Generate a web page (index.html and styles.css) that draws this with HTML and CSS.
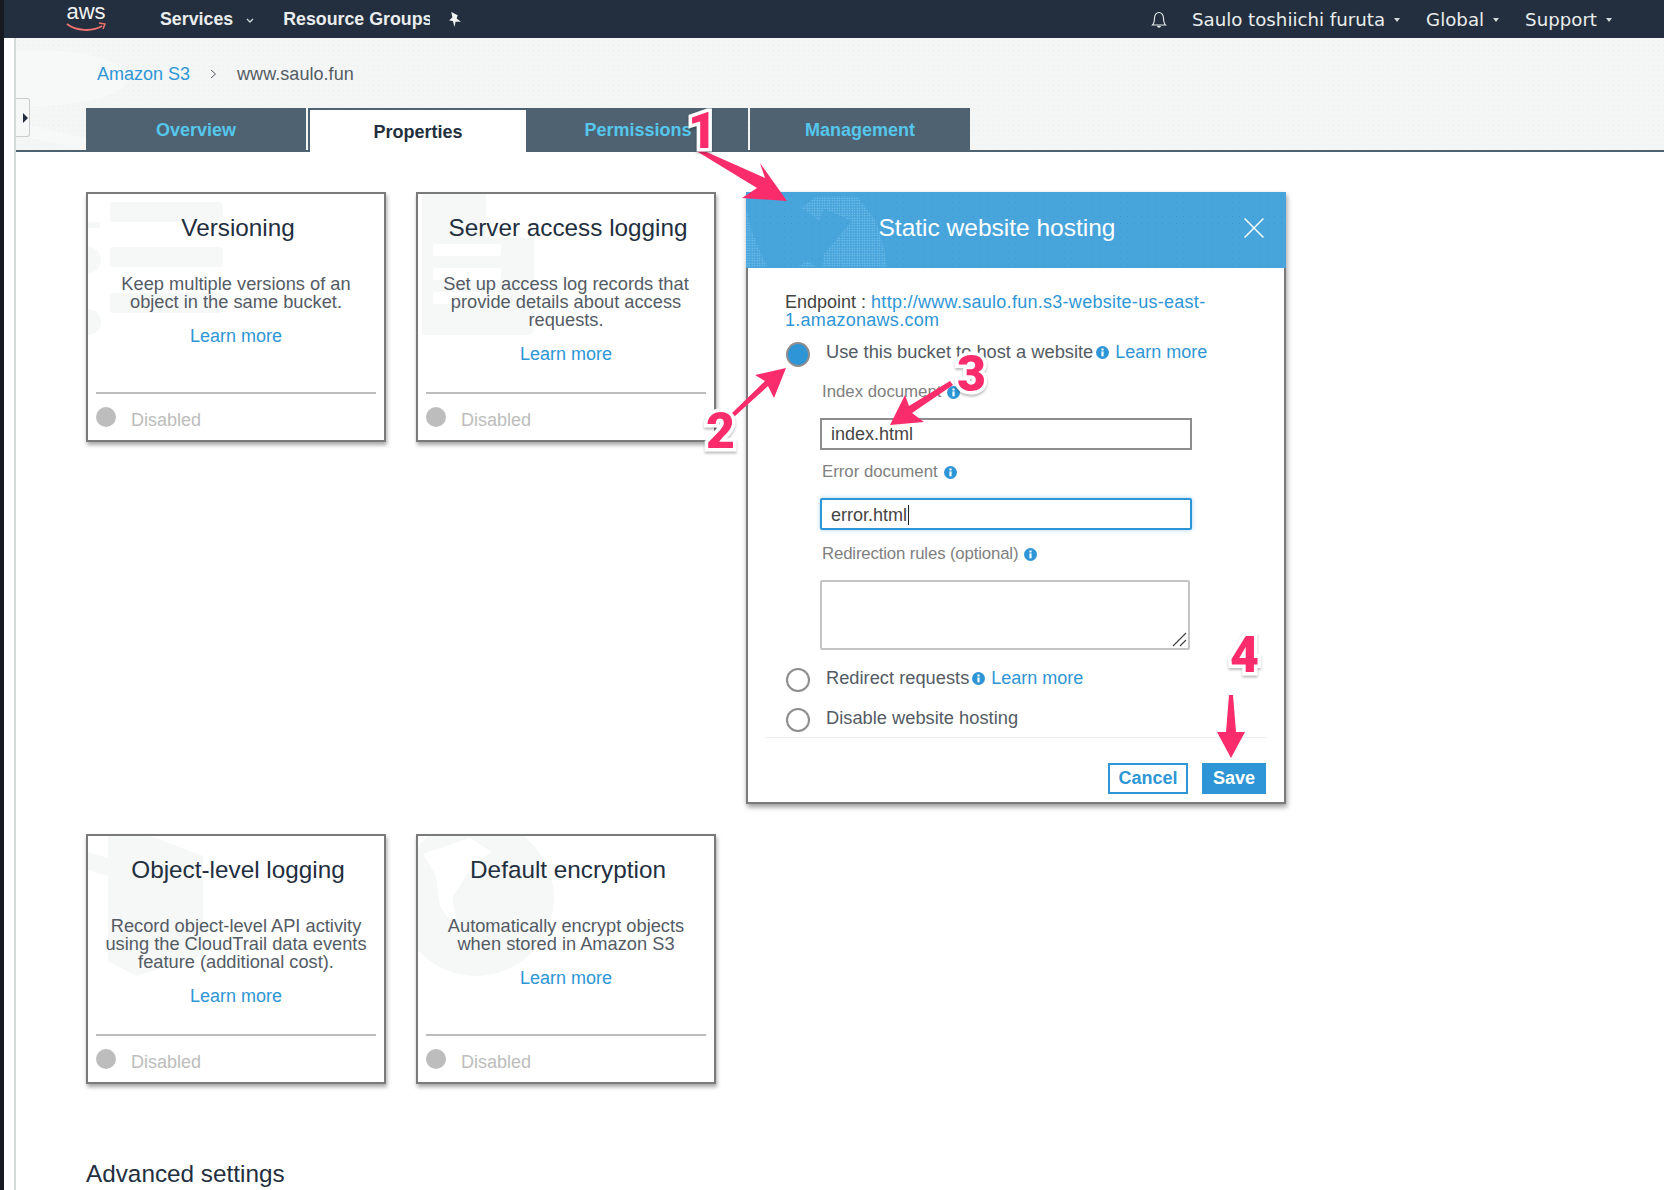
FILE: index.html
```html
<!DOCTYPE html>
<html lang="en">
<head>
<meta charset="utf-8">
<title>www.saulo.fun - Amazon S3</title>
<link rel="stylesheet" href="styles.css">
</head>
<body>
<header class="nav">
  <div class="logo">
    <span class="logo-text">aws</span>
    <svg class="logo-smile" viewBox="0 0 40 10" width="40" height="10"><path d="M1 2 C10 9 26 10 36 4" fill="none" stroke="#f0726f" stroke-width="2"/><path d="M33 1 L39 2 L37 7" fill="none" stroke="#f0726f" stroke-width="1.5"/></svg>
  </div>
  <span class="nav-main nav-services">Services</span>
  <svg class="chev" viewBox="0 0 8 5" width="8" height="5"><path d="M1 1 L4 4 L7 1" fill="none" stroke="#d5dbdb" stroke-width="1.3"/></svg>
  <span class="nav-main nav-groups">Resource Groups</span>
  <svg class="pin" viewBox="0 0 12 14" width="13" height="15"><path d="M3 0 L9 3 L8 6 L12 9 L7 9 L6 14 L4.500 8.500 L1 8 L4 5 Z" fill="#f2f3f3"/></svg>
  <div class="nav-right">
    <svg class="bell" viewBox="0 0 16 18" width="16" height="18"><path d="M1.500 14 C3.500 12 3.500 10 3.500 7 C3.500 4 5.500 1.500 8 1.500 C10.500 1.500 12.500 4 12.500 7 C12.500 10 12.500 12 14.500 14 Z" fill="none" stroke="#eaeded" stroke-width="1.100"/><path d="M6 15 C6.500 17.300 9.500 17.300 10 15 Z" fill="#eaeded"/></svg>
    <span class="nav-item nav-user">Saulo toshiichi furuta</span><span class="tri"></span>
    <span class="nav-item nav-global">Global</span><span class="tri"></span>
    <span class="nav-item nav-support">Support</span><span class="tri"></span>
  </div>
</header>

<div class="shell">
  <main class="content">
    <section class="subhead">
      <svg class="subhead-mark" viewBox="0 0 120 112" width="120" height="112"><ellipse cx="20" cy="40" rx="92" ry="28" fill="#f7f8f8"/><path d="M0 90 C40 100 70 106 90 112" stroke="#f7f8f8" stroke-width="12" fill="none"/></svg>
      <nav class="crumbs">
        <a class="crumb-link">Amazon S3</a>
        <svg class="crumb-sep" viewBox="0 0 7 10" width="7" height="10"><path d="M1 1 L5.500 5 L1 9" fill="none" stroke="#545b64" stroke-width="1"/></svg>
        <span class="crumb-current">www.saulo.fun</span>
      </nav>
      <div class="tabs">
        <span class="tab tab-overview">Overview</span>
        <span class="tab tab-active">Properties</span>
        <span class="tab tab-perm">Permissions</span>
        <span class="tab tab-mgmt">Management</span>
      </div>
    </section>

    <section class="grid">
      <article class="card">
        <svg class="mark" viewBox="0 0 296 245" width="296" height="245">
          <rect x="22" y="8" width="113" height="20" rx="3"/><rect x="22" y="53" width="113" height="20" rx="3"/><rect x="22" y="99" width="113" height="20" rx="3"/>
          <rect x="0" y="28" width="12" height="6"/><circle cx="0" cy="66" r="13"/><circle cx="0" cy="128" r="13"/>
        </svg>
        <h3 class="card-title">Versioning</h3>
        <p class="card-desc">Keep multiple versions of an object in the same bucket.</p>
        <a class="card-link">Learn more</a>
        <footer class="card-foot"><span class="dot"></span><span class="status">Disabled</span></footer>
      </article>

      <article class="card">
        <svg class="mark" viewBox="0 0 296 245" width="296" height="245">
          <path d="M4 0 L68 0 L116 44 L116 134 Q116 141 109 141 L4 141 Z"/>
          <path d="M68 0 L116 44 L68 44 Z" fill="#fff"/>
          <rect x="15" y="50" width="68" height="12" rx="3" fill="#fff"/><rect x="15" y="74" width="68" height="12" rx="3" fill="#fff"/><rect x="15" y="98" width="68" height="12" rx="3" fill="#fff"/>
        </svg>
        <h3 class="card-title">Server access logging</h3>
        <p class="card-desc">Set up access log records that provide details about access requests.</p>
        <a class="card-link">Learn more</a>
        <footer class="card-foot"><span class="dot"></span><span class="status">Disabled</span></footer>
      </article>

      <article class="modal">
        <div class="modal-head">
          <svg class="modal-globe" viewBox="0 0 150 75" width="150" height="75">
            <defs><pattern id="dots" width="2.500" height="2.500" patternUnits="userSpaceOnUse"><circle cx="1.200" cy="1.200" r="0.650" fill="#86c9ee"/></pattern></defs>
            <path d="M55 16 L71 4 L111 4 L130 29 L138 56 L141 75 L76 75 L78 62 L95 42 L106 29 L78 17 L73 29 L61 19 Z" fill="url(#dots)"/>
            <path d="M0 15 L6 40 L21 75 L0 75 Z" fill="url(#dots)"/>
            <path d="M51 75 L61 69 L71 75 Z" fill="url(#dots)"/>
          </svg>
          <h2 class="modal-title">Static website hosting</h2>
          <svg class="modal-close" viewBox="0 0 18 18" width="20" height="20"><path d="M0.500 0.500 L17.500 17.500 M17.500 0.500 L0.500 17.500" stroke="#fff" stroke-width="1.300"/></svg>
        </div>
        <div class="modal-body">
          <p class="endpoint">Endpoint : <a class="link link-url">http://www.saulo.fun.s3-website-us-east-1.amazonaws.com</a></p>
          <div class="radio-row radio-row-first">
            <span class="radio radio-on"></span>
            <span class="radio-label">Use this bucket to host a website</span>
            <svg class="info" viewBox="0 0 12 12" width="13" height="13"><circle cx="6" cy="6" r="6" fill="#2e96d6"/><rect x="5" y="5" width="2" height="4.500" fill="#fff"/><rect x="5" y="2.300" width="2" height="1.800" fill="#fff"/></svg>
            <a class="link radio-link">Learn more</a>
          </div>
          <div class="fields">
            <label class="field-label">Index document <svg class="info" viewBox="0 0 12 12" width="13" height="13"><circle cx="6" cy="6" r="6" fill="#2e96d6"/><rect x="5" y="5" width="2" height="4.500" fill="#fff"/><rect x="5" y="2.300" width="2" height="1.800" fill="#fff"/></svg></label>
            <div class="input">index.html</div>
            <label class="field-label">Error document <svg class="info" viewBox="0 0 12 12" width="13" height="13"><circle cx="6" cy="6" r="6" fill="#2e96d6"/><rect x="5" y="5" width="2" height="4.500" fill="#fff"/><rect x="5" y="2.300" width="2" height="1.800" fill="#fff"/></svg></label>
            <div class="input input-focus">error.html<span class="caret"></span></div>
            <label class="field-label field-label-tight">Redirection rules (optional) <svg class="info" viewBox="0 0 12 12" width="13" height="13"><circle cx="6" cy="6" r="6" fill="#2e96d6"/><rect x="5" y="5" width="2" height="4.500" fill="#fff"/><rect x="5" y="2.300" width="2" height="1.800" fill="#fff"/></svg></label>
            <div class="textarea"><svg class="grip" viewBox="0 0 15 15" width="15" height="15"><path d="M1 14 L14 1 M8 14 L14 8" stroke="#444" stroke-width="1.200"/></svg></div>
          </div>
          <div class="radio-row radio-row-second">
            <span class="radio"></span>
            <span class="radio-label">Redirect requests</span>
            <svg class="info" viewBox="0 0 12 12" width="13" height="13"><circle cx="6" cy="6" r="6" fill="#2e96d6"/><rect x="5" y="5" width="2" height="4.500" fill="#fff"/><rect x="5" y="2.300" width="2" height="1.800" fill="#fff"/></svg>
            <a class="link radio-link">Learn more</a>
          </div>
          <div class="radio-row radio-row-third">
            <span class="radio"></span>
            <span class="radio-label">Disable website hosting</span>
          </div>
        </div>
        <div class="modal-foot">
          <button class="btn btn-cancel">Cancel</button>
          <button class="btn btn-save">Save</button>
        </div>
      </article>

      <article class="card">
        <svg class="mark" viewBox="0 0 296 245" width="296" height="245">
          <path d="M20 0 L62 0 L115 20 L115 120 L48 140 L20 125 Z"/>
          <rect x="0" y="50" width="20" height="20" fill="#fff"/>
          <path d="M0 16 L20 22 L20 40 L0 34 Z"/>
        </svg>
        <h3 class="card-title">Object-level logging</h3>
        <p class="card-desc">Record object-level API activity using the CloudTrail data events feature (additional cost).</p>
        <a class="card-link">Learn more</a>
        <footer class="card-foot"><span class="dot"></span><span class="status">Disabled</span></footer>
      </article>

      <article class="card">
        <svg class="mark" viewBox="0 0 296 245" width="296" height="245">
          <circle cx="58" cy="62" r="78"/>
          <path d="M5 18 L18 40 L22 70 L42 100 L34 62 L48 40 L60 24 L74 16 L52 2 Z" fill="#fff"/>
        </svg>
        <h3 class="card-title">Default encryption</h3>
        <p class="card-desc">Automatically encrypt objects when stored in Amazon S3</p>
        <a class="card-link">Learn more</a>
        <footer class="card-foot"><span class="dot"></span><span class="status">Disabled</span></footer>
      </article>
    </section>

    <h2 class="advanced">Advanced settings</h2>
  </main>
</div>

<div class="drawer-toggle"><span class="drawer-arrow"></span></div>

<svg class="arrows" viewBox="0 0 1664 1190" width="1664" height="1190">
  <g fill="#fb2c6c">
    <path d="M698 152 L702 150 L765 178 L760 163 L787 201 L742 198 L757 188 Z"/>
    <path d="M731 414 L735 416 L768 386 L774 398 L786 368 L755 375 L765 381 Z"/>
    <path d="M950 381 L953 385 L912 413 L924 422 L890 425 L905 395 L909 406 Z"/>
    <path d="M1229 695 L1233 695 L1236 732 L1245 732 L1231 758 L1217 732 L1226 732 Z"/>
  </g>
</svg>
<span class="num num-1">1</span>
<span class="num num-2">2</span>
<span class="num num-3">3</span>
<span class="num num-4">4</span>
</body>
</html>
```

FILE: styles.css
```css
* { box-sizing: border-box; }
html, body { margin: 0; height: 1190px; overflow: hidden; }
body {
  position: relative;
  background: #fff;
  font-family: "Liberation Sans", Arial, sans-serif;
  color: #545b64;
  border-left: 4px solid #16191f;
}
h2, h3, p { margin: 0; font-weight: 400; }

/* top bar */
.nav {
  height: 38px;
  background: #232f3e;
  display: flex;
  align-items: center;
  padding-left: 62px;
  color: #fff;
}
.logo { width: 40px; height: 30px; position: relative; margin-right: 54px; }
.logo-text { display: block; font-size: 22px; line-height: 20px; color: #f2f3f3; text-align: center; margin-top: -2px; }
.logo-smile { position: absolute; left: 0; top: 18px; }
.nav-main { font-size: 17.8px; font-weight: 700; color: #eaeded; white-space: nowrap; }
.chev { margin: 2px 0 0 13px; }
.nav-groups { width: 147px; overflow: hidden; margin-left: 29px; }
.pin { margin-left: 18px; }
.nav-right { margin-left: auto; display: flex; align-items: center; padding: 1px 52px 0 0; }
.bell { margin-right: 25px; }
.nav-item { font-family: "DejaVu Sans", Verdana, sans-serif; font-size: 18.2px; color: #eaeded; white-space: nowrap; }
.tri { width: 0; height: 0; border: 3.5px solid transparent; border-top: 4px solid #d5dbdb; border-bottom: 0; margin-left: 9px; margin-right: 26px; }
.nav-right .tri:last-child { margin-right: 0; }

/* page frame */
.shell { padding-left: 10px; }
.content { border-left: 2px solid #d5dbdb; height: 1152px; }
.subhead {
  position: relative;
  height: 114px;
  padding-top: 27px;
  border-bottom: 2px solid #4f6272;
  background-color: #f4f6f6;
  background-image: radial-gradient(#ebeeee 0.6px, transparent 0.8px);
  background-size: 5px 5px;
}
.subhead-mark { position: absolute; left: 0; top: 0; }
.crumbs { position: relative; display: flex; align-items: center; height: 18px; padding-left: 81px; font-size: 18px; }
.crumb-link { color: #2e96d6; }
.crumb-sep { margin: 0 20px; }
.crumb-current { color: #545b64; letter-spacing: .05px; }
.tabs { position: relative; display: flex; margin: 25px 0 0 70px; }
.tab {
  width: 220px;
  height: 42px;
  line-height: 44px;
  text-align: center;
  background: #4f6272;
  color: #55c6ec;
  font-size: 18px;
  font-weight: 700;
}
.tab-overview { margin-right: 2px; }
.tab-active {
  width: 220px;
  height: 44px;
  background: #fff;
  color: #232f3e;
  line-height: 44px;
  border: 2px solid #4f6272;
  border-bottom: 0;
}
.tab-perm { margin-right: 2px; }

/* cards */
.grid {
  display: grid;
  grid-template-columns: 300px 300px 540px;
  column-gap: 30px;
  row-gap: 30px;
  align-items: start;
  padding: 40px 0 0 70px;
}
.card {
  position: relative;
  height: 250px;
  padding: 19px 8px 0;
  display: flex;
  flex-direction: column;
  align-items: center;
  text-align: center;
  border: 2px solid #7a7a7a;
  background: #fff;
  box-shadow: 1px 3px 4px rgba(0, 0, 0, .35);
}
.mark { position: absolute; left: 0; top: 0; fill: #f6f8f8; }
.card-title { position: relative; padding-left: 4px; font-size: 24.3px; line-height: 30px; color: #232f3e; }
.card-desc { position: relative; margin-top: 32px; padding: 0 3px; font-size: 18.25px; line-height: 18px; color: #545b64; }
.card-link { position: relative; margin-top: 16px; font-size: 18px; line-height: 18px; color: #2e96d6; }
.card-foot {
  position: relative;
  align-self: stretch;
  margin-top: auto;
  height: 48px;
  padding-top: 13px;
  border-top: 2px solid #bdbdbd;
  display: flex;
  align-items: flex-start;
  gap: 15px;
}
.dot { width: 20px; height: 20px; border-radius: 50%; background: #bdbdbd; }
.status { color: #bdbdbd; font-size: 18px; line-height: 26px; }

/* modal */
.modal {
  height: 612px;
  display: flex;
  flex-direction: column;
  border: 2px solid #7a7a7a;
  border-top: 0;
  background: #fff;
  box-shadow: 1px 3px 5px rgba(0, 0, 0, .4);
}
.modal-head {
  position: relative;
  height: 76px;
  margin: 0 -2px;
  padding-bottom: 4px;
  background-color: #48a5dc;
  background-image: radial-gradient(#3f97cf 0.6px, transparent 0.8px);
  background-size: 7px 7px;
  display: flex;
  align-items: center;
  justify-content: center;
}
.modal-globe { position: absolute; left: 0; top: 0; }
.modal-title { position: relative; font-size: 24.5px; color: #fff; margin-right: 38px; }
.modal-close { position: absolute; right: 22px; top: 26px; }
.modal-body { padding: 25px 0 0 38px; }
.endpoint { width: 425px; margin-left: -1px; font-size: 18px; line-height: 18px; color: #444; }
.link { color: #2e96d6; }
.link-url { letter-spacing: .28px; }
.radio-row { display: flex; align-items: flex-start; font-size: 18px; line-height: 20px; color: #545b64; height: 24px; }
.radio-row-first { margin-top: 13px; }
.radio-row-second { margin-top: 18px; }
.radio-row-third { margin-top: 16px; }
.radio { width: 24px; height: 24px; border-radius: 50%; border: 2px solid #8d8d8d; margin-right: 16px; background: #fff; flex: none; }
.radio-on { background: #2e96d6; height: 25px; }
.radio-label { white-space: nowrap; font-size: 18.3px; }
.info { flex: none; }
.radio-row .info { margin: 4px 6px 0 3px; }
.fields { padding-left: 35px; margin-top: 17px; }
.field-label { display: flex; align-items: center; gap: 6px; height: 18px; margin: 0 0 17px 1px; font-size: 16.8px; font-weight: 400; color: #808080; }
.field-label-tight { letter-spacing: -.15px; }
.input {
  width: 372px;
  height: 32px;
  margin: 0 0 13px -1px;
  padding-left: 9px;
  line-height: 28px;
  font-size: 18px;
  color: #444;
  border: 2px solid #8d8d8d;
  background: #fff;
}
.input-focus { border-color: #2e96d6; box-shadow: 0 0 4px rgba(46, 150, 214, .4); margin-bottom: 15px; line-height: 31px; border-radius: 2px; }
.caret { display: inline-block; width: 1px; height: 20px; background: #222; vertical-align: -4px; margin-left: 1px; }
.textarea { position: relative; width: 370px; height: 70px; margin-left: -1px; border: 2px solid #c4c4c4; border-radius: 2px; background: #fff; }
.grip { position: absolute; right: 1px; bottom: 1px; }
.modal-foot {
  margin: 5px 18px 0 18px;
  padding-top: 25px;
  border-top: 1px solid #eaeded;
  display: flex;
  justify-content: flex-end;
  gap: 14px;
}
.btn { height: 31px; padding: 0; font: 700 18px "Liberation Sans", Arial, sans-serif; }
.btn-cancel { width: 80px; background: #fff; border: 2px solid #2e96d6; color: #2e96d6; }
.btn-save { width: 64px; background: #2e96d6; border: 0; color: #fff; }

.advanced { margin: 75px 0 0 70px; font-size: 24.3px; line-height: 30px; color: #232f3e; }

/* overlays */
.drawer-toggle {
  position: absolute;
  left: 12px;
  top: 98px;
  width: 14px;
  height: 39px;
  padding-right: 1px;
  background: #f6f7f7;
  border: 1px solid #c8cccc;
  border-left: 0;
  border-radius: 0 3px 3px 0;
  display: flex;
  align-items: center;
  justify-content: flex-end;
}
.drawer-arrow { width: 0; height: 0; border: 5px solid transparent; border-left: 5px solid #232f3e; border-right: 0; }
.arrows { position: absolute; left: -4px; top: 0; pointer-events: none; }
.num {
  position: absolute;
  font-family: Roboto, "Liberation Sans", Arial, sans-serif;
  font-weight: 900;
  font-size: 50px;
  line-height: 44px;
  color: #fb2c6c;
  -webkit-text-stroke: 7px #fff;
  paint-order: stroke fill;
  filter: drop-shadow(0 2px 1px rgba(0, 0, 0, .25));
}
.num-1 { left: 684px; top: 109px; }
.num-2 { left: 702px; top: 409px; }
.num-3 { left: 953px; top: 352px; }
.num-4 { left: 1226px; top: 633px; }
```
